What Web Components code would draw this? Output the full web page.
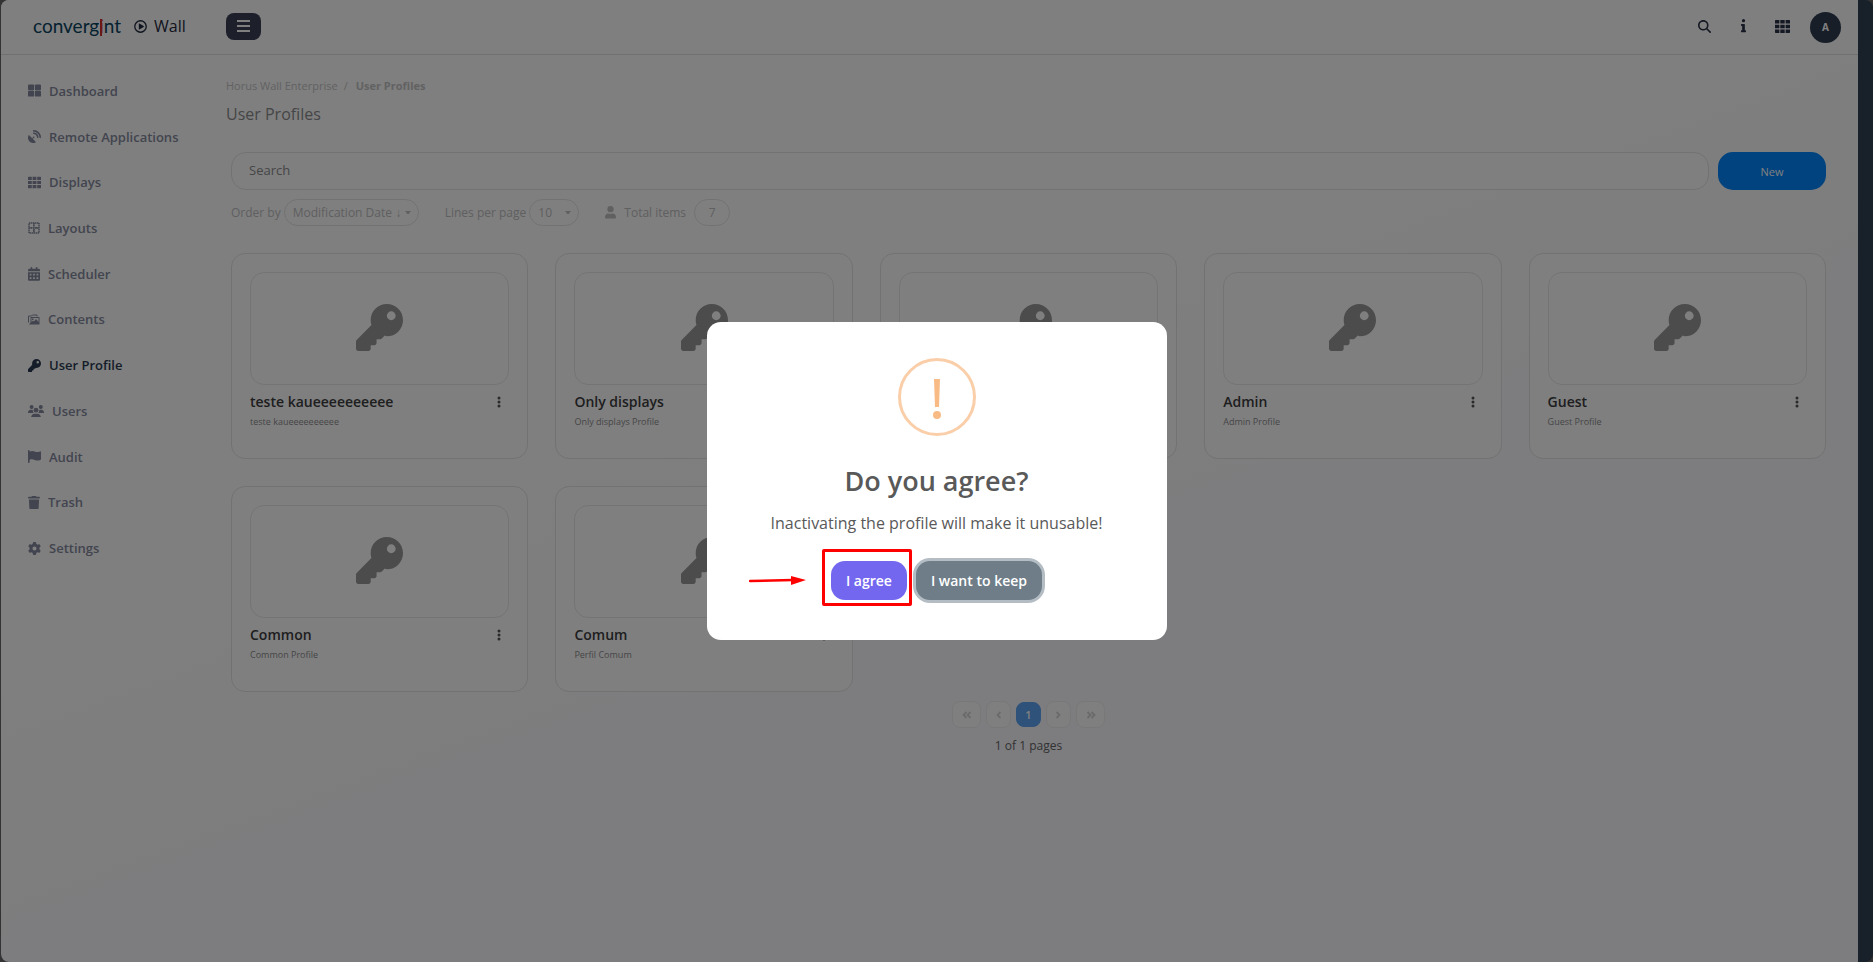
<!DOCTYPE html>
<html lang="en">
<head>
<meta charset="utf-8">
<meta name="viewport" content="width=device-width, initial-scale=1">
<title>User Profiles</title>
<style>
  body {
    margin: 0;
    background-color: #666;
    font-family: "Open Sans", "Noto Sans", sans-serif;
    color: #344767;
  }
</style>
</head>
<body>
<wall-app>
  <wall-header slot="header"></wall-header>
  <wall-sidebar slot="sidebar">
    <nav-item icon="dashboard" size="13">Dashboard</nav-item>
    <nav-item icon="dish" size="13">Remote Applications</nav-item>
    <nav-item icon="grid" size="13">Displays</nav-item>
    <nav-item icon="layout" size="12">Layouts</nav-item>
    <nav-item icon="calendar" size="12">Scheduler</nav-item>
    <nav-item icon="images" size="12">Contents</nav-item>
    <nav-item icon="key" size="13" active>User Profile</nav-item>
    <nav-item icon="users" size="16">Users</nav-item>
    <nav-item icon="flag" size="13">Audit</nav-item>
    <nav-item icon="trash" size="12">Trash</nav-item>
    <nav-item icon="cog" size="13">Settings</nav-item>
  </wall-sidebar>
  <page-heading></page-heading>
  <search-bar></search-bar>
  <list-filters></list-filters>
  <profile-grid>
    <profile-card>teste kaueeeeeeeeee<span slot="description">teste kaueeeeeeeeee</span></profile-card>
    <profile-card>Only displays<span slot="description">Only displays Profile</span></profile-card>
    <profile-card></profile-card>
    <profile-card>Admin<span slot="description">Admin Profile</span></profile-card>
    <profile-card>Guest<span slot="description">Guest Profile</span></profile-card>
    <profile-card>Common<span slot="description">Common Profile</span></profile-card>
    <profile-card>Comum<span slot="description">Perfil Comum</span></profile-card>
  </profile-grid>
  <page-nav></page-nav>
</wall-app>
<confirm-dialog>
  <span slot="title">Do you agree?</span>
  Inactivating the profile will make it unusable!
</confirm-dialog>

<script>
const icons = {
  dashboard: ['0 0 512 512', '<rect y="16" width="240" height="226" rx="36"/><rect x="272" y="16" width="240" height="226" rx="36"/><rect y="270" width="240" height="226" rx="36"/><rect x="272" y="270" width="240" height="226" rx="36"/>'],
  dish: ['0 0 512 512', '<path d="M192 32c0-17.7 14.3-32 32-32C383.1 0 512 128.9 512 288c0 17.7-14.3 32-32 32s-32-14.3-32-32C448 164.3 347.7 64 224 64c-17.7 0-32-14.3-32-32zM60.6 220.6L164.7 324.7l28.4-28.4c-.7-2.6-1.1-5.4-1.1-8.3c0-17.7 14.3-32 32-32s32 14.3 32 32s-14.3 32-32 32c-2.9 0-5.6-.4-8.3-1.1l-28.4 28.4L291.4 451.4c14.5 14.5 11.8 38.8-7.3 46.3C260.5 506.9 234.9 512 208 512C93.1 512 0 418.9 0 304c0-26.9 5.1-52.5 14.4-76.1c7.5-19 31.8-21.8 46.3-7.3zM224 96c106 0 192 86 192 192c0 17.7-14.3 32-32 32s-32-14.3-32-32c0-70.7-57.3-128-128-128c-17.7 0-32-14.3-32-32s14.3-32 32-32z"/>'],
  grid: ['0 0 512 512', '<path d="M24 32h125v125H0V56q0-24 24-24zM181 32h150v125H181zM363 32h125q24 0 24 24v101H363zM0 193h149v126H0zM181 193h150v126H181zM363 193h149v126H363zM0 355h149v125H24q-24 0-24-24zM181 355h150v125H181zM363 355h149v101q0 24-24 24H363z"/>'],
  layout: ['0 0 12 12', '<path d="M1 1h10v10H1z" fill="none" stroke="currentColor" stroke-width="1.500" stroke-dasharray="1.500 .5"/><path d="M6 1v10M1 6h10M3.500 5v2M8.500 5v2M5 3.500h2M5 8.500h2" fill="none" stroke="currentColor" stroke-width="1.500" stroke-dasharray="1.500 .5"/>'],
  calendar: ['0 0 448 512', '<path fill-rule="evenodd" d="M128 0c17.700 0 32 14.300 32 32V64H288V32c0-17.700 14.300-32 32-32s32 14.300 32 32V64h48c26.500 0 48 21.500 48 48v48H0V112C0 85.500 21.500 64 48 64H96V32c0-17.700 14.300-32 32-32zM0 192H448V464c0 26.500-21.500 48-48 48H48c-26.500 0-48-21.500-48-48zM64 256v64h64v-64zM192 256v64h64v-64zM320 256v64h64v-64zM64 384v64h64v-64zM192 384v64h64v-64zM320 384v64h64v-64z"/>'],
  images: ['0 0 24 22', '<path d="M1 17V4h6l2-2h9v3" fill="none" stroke="currentColor" stroke-width="2"/><path fill-rule="evenodd" d="M5 6h18v15H2l3-4zM7 8v8l3-3 2 2 4-5 5 6V8zM8 9h3v3H8z"/>'],
  key: ['0 0 512 512', '<path d="M336 352c97.200 0 176-78.800 176-176S433.200 0 336 0S160 78.800 160 176c0 18.700 2.900 36.800 8.300 53.700L7 391c-4.500 4.500-7 10.600-7 17v80c0 13.300 10.700 24 24 24h112c13.300 0 24-10.700 24-24V448h40c13.300 0 24-10.700 24-24V384h40c6.400 0 12.500-2.500 17-7l33.300-33.300c7 5 14 8.300 21.700 8.300zM384 80a48 48 0 1 1 0 96 48 48 0 1 1 0-96z"/>'],
  users: ['0 0 640 512', '<circle cx="144" cy="80" r="80"/><circle cx="512" cy="80" r="80"/><circle cx="320" cy="208" r="96"/><path d="M0 298.700C0 239.800 47.800 192 106.700 192h42.700c15.900 0 31 3.500 44.600 9.700c-11 50 8 92 43 118.300H21.300C9.600 320 0 310.400 0 298.700zM405.300 320c33-28 55-68 41-118.500c13.600-6.100 28.600-9.500 44.300-9.500h42.700C592.200 192 640 239.800 640 298.700c0 11.800-9.600 21.300-21.300 21.300zM128 485.300C128 411.700 187.700 352 261.300 352h117.300C452.300 352 512 411.700 512 485.300c0 14.700-11.900 26.700-26.700 26.700H154.700c-14.700 0-26.700-11.900-26.700-26.700z"/>'],
  flag: ['0 0 512 512', '<path d="M64 32C64 14.300 49.700 0 32 0S0 14.300 0 32v448c0 17.700 14.300 32 32 32s32-14.300 32-32V384c80-25 130-20 200 10 80 30 150 25 220-4 18-7 28-16 28-34V82c0-22-22-36-42-26-70 34-140 34-200 4C190 25 130 35 64 62z"/>'],
  trash: ['0 0 448 512', '<path d="M135 18c6-11 17-18 29-18h120c12 0 23 7 29 18l7 14h96c18 0 32 14 32 32s-14 32-32 32H32C14 96 0 82 0 64s14-32 32-32h96zM32 128h384l-21 339c-2 25-23 45-48 45H101c-25 0-46-20-48-45z"/>'],
  cog: ['0 0 512 512', '<path d="M495.900 166.600c3.200 8.700 .5 18.400-6.400 24.600l-43.300 39.400c1.100 8.300 1.700 16.800 1.700 25.400s-.6 17.100-1.700 25.400l43.300 39.400c6.900 6.200 9.600 15.900 6.400 24.600c-4.400 11.900-9.700 23.300-15.800 34.300l-4.700 8.100c-6.600 11-14 21.400-22.100 31.200c-5.900 7.200-15.700 9.600-24.500 6.800l-55.700-17.700c-13.400 10.300-28.200 18.900-44 25.400l-12.500 57.100c-2 9.100-9 16.300-18.200 17.800c-13.800 2.300-28 3.500-42.500 3.500s-28.700-1.200-42.500-3.500c-9.200-1.500-16.200-8.700-18.200-17.800l-12.500-57.100c-15.800-6.500-30.600-15.100-44-25.400L83.100 425.900c-8.800 2.800-18.600 .3-24.500-6.800c-8.100-9.800-15.500-20.200-22.100-31.200l-4.700-8.100c-6.100-11-11.400-22.400-15.800-34.300c-3.200-8.700-.5-18.400 6.400-24.600l43.300-39.400C64.600 273.100 64 264.600 64 256s.6-17.100 1.700-25.400L22.400 191.200c-6.900-6.200-9.600-15.900-6.400-24.600c4.400-11.900 9.700-23.300 15.800-34.300l4.700-8.100c6.600-11 14-21.400 22.100-31.200c5.900-7.200 15.700-9.600 24.500-6.800l55.700 17.700c13.400-10.300 28.200-18.900 44-25.400l12.500-57.100c2-9.100 9-16.300 18.200-17.800C227.300 1.200 241.500 0 256 0s28.700 1.200 42.500 3.500c9.200 1.500 16.200 8.700 18.200 17.800l12.500 57.100c15.800 6.500 30.600 15.100 44 25.400l55.700-17.700c8.800-2.800 18.600-.3 24.500 6.800c8.100 9.800 15.500 20.200 22.100 31.200l4.700 8.100c6.100 11 11.400 22.400 15.800 34.300zM256 336a80 80 0 1 0 0-160 80 80 0 1 0 0 160z"/>'],
  search: ['0 0 512 512', '<path d="M416 208c0 45.900-14.900 88.300-40 122.700L502.600 457.400c12.500 12.500 12.500 32.800 0 45.300s-32.800 12.500-45.300 0L330.700 376c-34.400 25.200-76.800 40-122.700 40C93.100 416 0 322.900 0 208S93.100 0 208 0S416 93.100 416 208zM208 352a144 144 0 1 0 0-288 144 144 0 1 0 0 288z"/>'],
  info: ['0 0 192 512', '<circle cx="96" cy="64" r="62"/><path d="M20 192h108c11 0 20 9 20 20v220h24c11 0 20 9 20 20v40c0 11-9 20-20 20H20c-11 0-20-9-20-20v-40c0-11 9-20 20-20h24V272H20c-11 0-20-9-20-20v-40c0-11 9-20 20-20z"/>'],
  person: ['0 0 448 512', '<circle cx="224" cy="128" r="128"/><path d="M0 460c0-90 60-156 130-156q94 34 188 0c70 0 130 66 130 156 0 30-18 52-48 52H48c-30 0-48-22-48-52z"/>'],
  bars: ['0 0 13 12', '<path d="M0 1h13M0 6h13M0 11h13" fill="none" stroke="currentColor" stroke-width="2"/>'],
  play: ['0 0 512 512', '<circle cx="256" cy="256" r="226" fill="none" stroke="currentColor" stroke-width="52"/><path d="M190 150q0-22 20-11l170 100q16 17 0 34L210 373q-20 11-20-11z"/>'],
  dots: ['0 0 4 12', '<circle cx="2" cy="2" r="1.500"/><circle cx="2" cy="6" r="1.500"/><circle cx="2" cy="10" r="1.500"/>'],
  caret: ['0 0 8 5', '<path d="M0 0h8L4 5z"/>'],
  first: ['0 0 10 8', '<path d="M4.500 1l-3 3 3 3M8.500 1l-3 3 3 3" fill="none" stroke="currentColor" stroke-width="1.800"/>'],
  prev: ['0 0 5 8', '<path d="M4.500 1l-3 3 3 3" fill="none" stroke="currentColor" stroke-width="1.800"/>'],
  next: ['0 0 5 8', '<path d="M.5 1l3 3-3 3" fill="none" stroke="currentColor" stroke-width="1.800"/>'],
  last: ['0 0 10 8', '<path d="M1.500 1l3 3-3 3M5.500 1l3 3-3 3" fill="none" stroke="currentColor" stroke-width="1.800"/>']
};

// size is the drawn width, the height follows the view box
class UiIcon extends HTMLElement {
  connectedCallback() {
    if (this.shadowRoot) return;
    const [box, shape] = icons[this.getAttribute('name')];
    const size = this.getAttribute('size');
    this.attachShadow({ mode: 'open' }).innerHTML = `
      <style>
        :host { display: inline-flex; flex-shrink: 0; }
        svg { display: block; width: ${size}px; height: auto; fill: currentColor; }
      </style>
      <svg viewBox="${box}" aria-hidden="true">${shape}</svg>`;
  }
}

function define(name, html, setup) {
  const template = document.createElement('template');
  template.innerHTML = html;

  customElements.define(name, class extends HTMLElement {
    connectedCallback() {
      if (this.shadowRoot) return;
      const root = this.attachShadow({ mode: 'open' });
      root.appendChild(template.content.cloneNode(true));
      if (setup) setup(this, root);
    }
  });
}

customElements.define('ui-icon', UiIcon);

define('wall-app', `
<style>
  :host {
    display: block;
    padding: 0 0 0 1px;
  }

  .frame {
    display: flex;
    min-height: 100vh;
    border-radius: 8px;
    overflow: hidden;
    background-color: #304054;
  }

  .page {
    flex: 1;
    min-width: 0;
    margin-right: 15px;
    background: linear-gradient(160deg, #fff 35%, #fafaff 65%);
  }

  .body {
    display: flex;
  }

  main {
    flex: 1;
    min-width: 0;
    padding: 22px 32px 22px 5px;
  }
</style>
<div class="frame">
  <div class="page">
    <slot name="header"></slot>
    <div class="body">
      <slot name="sidebar"></slot>
      <main><slot></slot></main>
    </div>
  </div>
</div>
`);

define('wall-header', `
<style>
  :host {
    display: block;
  }

  header {
    display: flex;
    align-items: center;
    height: 52px;
    padding: 0 17px 2px 32px;
    border-bottom: 1px solid #dee0e4;
    background-color: #fff;
  }

  .brand {
    display: flex;
    align-items: center;
    width: 193px;
    color: #1f2a3d;
    text-decoration: none;
  }

  .logo {
    width: 89px;
    margin-right: 12px;
    font-family: Lato, sans-serif;
    font-size: 19px;
    line-height: 24px;
    color: #0a4460;
  }

  .logo span {
    position: relative;
    color: #d82c2c;
  }

  /* the long red stem of the i */
  .logo span::after {
    content: "";
    position: absolute;
    left: 1px;
    top: 5px;
    width: 2px;
    height: 17px;
    background-color: #d8302c;
  }

  .product {
    margin-left: 7px;
    font-size: 16px;
    line-height: 24px;
  }

  button {
    display: flex;
    align-items: center;
    justify-content: center;
    padding: 0;
    border: 0;
    background: none;
    color: #2b3347;
  }

  .toggle {
    width: 35px;
    height: 27px;
    border-radius: 8px;
    background-color: #3b4157;
    color: #fff;
  }

  .tools {
    display: flex;
    align-items: center;
    margin-left: auto;
  }

  .tools button {
    width: 39px;
    height: 30px;
  }

  .tools .avatar {
    width: 31px;
    height: 31px;
    margin: 2px 0 0 8px;
    border-radius: 50%;
    background-color: #2f3d50;
    color: #fff;
    font: 700 10px "Open Sans", sans-serif;
  }
</style>
<header>
  <a class="brand" href="#">
    <div class="logo">converg<span>i</span>nt</div>
    <ui-icon name="play" size="13"></ui-icon>
    <div class="product">Wall</div>
  </a>
  <button class="toggle" aria-label="Menu"><ui-icon name="bars" size="13"></ui-icon></button>
  <div class="tools">
    <button aria-label="Search"><ui-icon name="search" size="13"></ui-icon></button>
    <button aria-label="Information"><ui-icon name="info" size="5"></ui-icon></button>
    <button aria-label="Applications"><ui-icon name="grid" size="15"></ui-icon></button>
    <button class="avatar">A</button>
  </div>
</header>
`);

define('wall-sidebar', `
<style>
  :host {
    display: block;
    flex-shrink: 0;
    width: 220px;
  }

  nav {
    display: grid;
    grid-auto-rows: 1fr;
    min-height: 503px;
    padding: 13px 0 0 27px;
  }
</style>
<nav><slot></slot></nav>
`);

define('nav-item', `
<style>
  :host {
    display: flex;
    align-items: center;
    color: #858a9e;
    font-size: 13px;
    font-weight: 600;
    line-height: 20px;
  }

  :host([active]) {
    color: #2b3a52;
  }

  a {
    display: flex;
    align-items: center;
    gap: 8px;
    color: inherit;
    text-decoration: none;
  }
</style>
<a href="#"><span><slot></slot></span></a>
`, (host, root) => {
  const icon = document.createElement('ui-icon');
  icon.setAttribute('name', host.getAttribute('icon'));
  icon.setAttribute('size', host.getAttribute('size'));
  root.querySelector('a').prepend(icon);
});

define('page-heading', `
<style>
  :host {
    display: block;
  }

  nav {
    display: flex;
    gap: 6px;
    font-size: 11px;
    line-height: 18px;
    color: #c4c4c6;
  }

  a {
    color: inherit;
    text-decoration: none;
  }

  b {
    margin-left: 2px;
  }

  h1 {
    margin: 7px 0 0;
    font-size: 16px;
    font-weight: 400;
    line-height: 24px;
    color: #8c8c8e;
  }
</style>
<nav aria-label="Breadcrumb"><a href="#">Horus Wall Enterprise</a><span>/</span><b>User Profiles</b></nav>
<h1>User Profiles</h1>
`);

define('search-bar', `
<style>
  :host {
    display: flex;
    gap: 9px;
    margin: 26px 0 0 5px;
  }

  input {
    box-sizing: border-box;
    flex: 1;
    min-width: 0;
    height: 38px;
    padding: 0 17px 2px;
    border: 1px solid #e4e4e6;
    border-radius: 15px;
    background-color: #fff;
    font: 13px "Open Sans", sans-serif;
  }

  input::placeholder {
    color: #8c8c8e;
  }

  button {
    width: 108px;
    border: 0;
    border-radius: 15px;
    background-color: #0086ff;
    color: #fff;
    font: 11px "Open Sans", sans-serif;
  }
</style>
<input type="text" placeholder="Search" aria-label="Search">
<button>New</button>
`);

define('list-filters', `
<style>
  :host {
    display: flex;
    flex-wrap: wrap;
    align-items: center;
    gap: 9px 26px;
    margin: 9px 0 0 5px;
    font-size: 12px;
    color: #c0c0c2;
  }

  .field {
    display: flex;
    align-items: center;
    gap: 3px;
  }

  .pick {
    display: grid;
    align-items: center;
  }

  .pick > * {
    grid-area: 1 / 1;
  }

  .pick ui-icon {
    justify-self: end;
    margin-right: 8px;
    pointer-events: none;
  }

  select,
  output {
    box-sizing: border-box;
    height: 27px;
    border: 1px solid #e4e4e6;
    border-radius: 14px;
    background-color: transparent;
    color: inherit;
    font: 12px "Open Sans", "Liberation Mono", sans-serif;
  }

  select {
    appearance: none;
    padding: 0 0 0 8px;
  }

  #order {
    width: 135px;
  }

  #lines {
    width: 50px;
  }

  output {
    width: 36px;
    margin-left: 5px;
    line-height: 25px;
    text-align: center;
  }

  .field ui-icon + label {
    margin-left: 5px;
  }
</style>
<div class="field">
  <label for="order">Order by</label>
  <div class="pick">
    <select id="order"><option>Modification Date ↓</option></select>
    <ui-icon name="caret" size="6"></ui-icon>
  </div>
</div>
<div class="field">
  <label for="lines">Lines per page</label>
  <div class="pick">
    <select id="lines"><option>10</option></select>
    <ui-icon name="caret" size="6"></ui-icon>
  </div>
</div>
<div class="field">
  <ui-icon name="person" size="11"></ui-icon>
  <label for="total">Total items</label>
  <output id="total">7</output>
</div>
`);

define('profile-grid', `
<style>
  :host {
    display: grid;
    grid-template-columns: repeat(auto-fill, minmax(280px, 1fr));
    gap: 27px;
    margin: 27px 0 0 5px;
  }
</style>
<slot></slot>
`);

define('profile-card', `
<style>
  :host {
    display: block;
    padding: 18px 18px 28px;
    border: 1px solid #e4e4e6;
    border-radius: 14px;
    background-color: #fff;
  }

  .thumb {
    display: flex;
    align-items: center;
    justify-content: center;
    height: 108px;
    padding-bottom: 3px;
    border: 1px solid #e8e8ea;
    border-radius: 14px;
    color: #989898;
  }

  .row {
    display: flex;
    align-items: center;
    justify-content: space-between;
    margin-top: 7px;
  }

  h2 {
    height: 20px;
    margin: 0;
    font-size: 14px;
    font-weight: 600;
    line-height: 20px;
    color: #3c3c3e;
  }

  button {
    display: flex;
    padding: 0 8px;
    border: 0;
    background: none;
    color: #555;
  }

  p {
    height: 18px;
    margin: 0;
    font-size: 9px;
    line-height: 20px;
    color: #8c8c8e;
  }
</style>
<div class="thumb"><ui-icon name="key" size="47"></ui-icon></div>
<div class="row">
  <h2><slot></slot></h2>
  <button aria-label="Options"><ui-icon name="dots" size="4"></ui-icon></button>
</div>
<p><slot name="description"></slot></p>
`);

define('page-nav', `
<style>
  :host {
    display: block;
    margin: 9px 0 0 5px;
  }

  nav {
    display: flex;
    justify-content: center;
    align-items: center;
    gap: 5px;
  }

  button {
    box-sizing: border-box;
    display: flex;
    align-items: center;
    justify-content: center;
    width: 25px;
    height: 27px;
    padding: 0;
    border: 1px solid #f0f0f2;
    border-radius: 8px;
    background-color: #fff;
    color: #d4d4d6;
    font: 600 11px "Open Sans", sans-serif;
  }

  .wide {
    width: 29px;
  }

  .current {
    height: 25px;
    border-color: #5ca4f4;
    background-color: #5ca4f4;
    color: #fff;
  }

  p {
    margin: 8px 0 0;
    font-size: 12px;
    line-height: 20px;
    text-align: center;
    color: #666;
  }
</style>
<nav aria-label="Pages">
  <button class="wide" aria-label="First"><ui-icon name="first" size="10"></ui-icon></button>
  <button aria-label="Previous"><ui-icon name="prev" size="5"></ui-icon></button>
  <button class="current">1</button>
  <button aria-label="Next"><ui-icon name="next" size="5"></ui-icon></button>
  <button class="wide" aria-label="Last"><ui-icon name="last" size="10"></ui-icon></button>
</nav>
<p>1 of 1 pages</p>
`);

define('confirm-dialog', `
<style>
  :host {
    position: fixed;
    inset: 0;
    display: flex;
    align-items: center;
    justify-content: center;
    background-color: rgba(0, 0, 0, 0.5);
  }

  .popup {
    box-sizing: border-box;
    width: 460px;
    max-width: 100%;
    padding: 36px 20px 40px;
    border-radius: 14px;
    background-color: #fff;
    color: #595959;
    text-align: center;
  }

  .warning {
    display: flex;
    flex-direction: column;
    align-items: center;
    box-sizing: border-box;
    width: 78px;
    height: 78px;
    margin: 0 auto;
    padding-top: 18px;
    border: 3px solid #facea8;
    border-radius: 50%;
  }

  .warning svg {
    width: 8px;
    height: 40px;
    fill: #f8bb86;
  }

  h2 {
    margin: 25px 0 0;
    font-size: 27px;
    font-weight: 600;
    line-height: 40px;
  }

  p {
    margin: 9px 0 0;
    font-size: 16px;
    line-height: 26px;
  }

  .actions {
    display: flex;
    justify-content: center;
    gap: 9px;
    margin-top: 25px;
  }

  button {
    height: 39px;
    padding: 0 15px;
    border: 0;
    border-radius: 14px;
    background-color: #6e7d88;
    color: #fff;
    font: 600 14px "Open Sans", sans-serif;
  }

  .keep {
    box-shadow: 0 0 0 3px #b4bdc4;
  }

  .agree {
    background-color: #7367f0;
  }

  .target {
    position: relative;
  }

  /* frame and arrow that point out the button */
  .target::before {
    content: "";
    position: absolute;
    inset: -12px -5px -6px -9px;
    border: 3px solid #f00;
    border-radius: 2px;
    pointer-events: none;
  }

  .arrow {
    position: absolute;
    right: 101px;
    top: 14px;
    width: 57px;
    height: 10px;
  }
</style>
<div class="popup" role="dialog" aria-modal="true" aria-labelledby="title">
  <div class="warning"><svg viewBox="0 0 8 40"><path d="M1 0h6L6 28H2z"/><circle cx="4" cy="36" r="4"/></svg></div>
  <h2 id="title"><slot name="title"></slot></h2>
  <p><slot></slot></p>
  <div class="actions">
    <div class="target">
      <svg class="arrow" viewBox="0 0 57 10" aria-hidden="true"><path d="M1 6l43-1" stroke="#f00" stroke-width="2.500" stroke-linecap="round"/><path d="M42 1l15 4-15 5z" fill="#f00"/></svg>
      <button class="agree">I agree</button>
    </div>
    <button class="keep">I want to keep</button>
  </div>
</div>
`);
</script>
</body>
</html>
